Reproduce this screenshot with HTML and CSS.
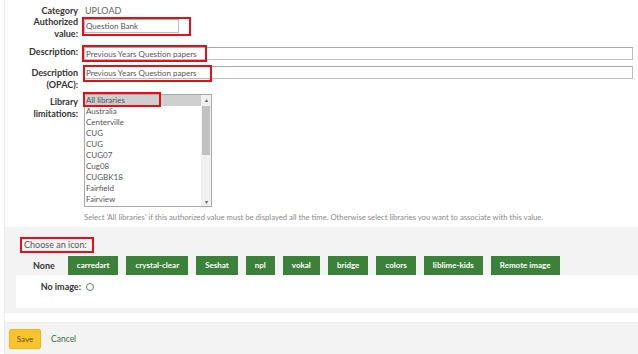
FILE: index.html
```html
<!DOCTYPE html>
<html>
<head>
    <meta charset="UTF-8">
    <title>Modify authorized value</title>
    <link rel="stylesheet" href="styles.css">
</head>
<body>
    <div class="page">
    <form action="#" method="post">
        <div class="row row-cat">
            <span class="lbl">Category</span>
            <span class="value">UPLOAD</span>
        </div>

        <div class="row row-auth">
            <label class="lbl" for="authval">Authorized<br>value:</label>
            <div class="mark-wrap">
                <input type="text" id="authval" class="field field-short" value="Question Bank">
                <span class="mark mark-auth"></span>
            </div>
        </div>

        <div class="row row-desc">
            <label class="lbl" for="desc">Description:</label>
            <div class="mark-wrap grow">
                <input type="text" id="desc" class="field field-long" value="Previous Years Question papers">
                <span class="mark mark-desc"></span>
            </div>
        </div>

        <div class="row row-opac">
            <label class="lbl" for="opac">Description<br>(OPAC):</label>
            <div class="mark-wrap grow">
                <input type="text" id="opac" class="field field-long" value="Previous Years Question papers">
                <span class="mark mark-opac"></span>
            </div>
        </div>

        <div class="row row-lib">
            <span class="lbl">Library<br>limitations:</span>
            <div class="mark-wrap">
                <div class="libselect">
                    <div class="opts">
                        <div class="opt selected">All libraries</div>
                        <div class="opt">Australia</div>
                        <div class="opt">Centerville</div>
                        <div class="opt">CUG</div>
                        <div class="opt">CUG</div>
                        <div class="opt">CUG07</div>
                        <div class="opt">Cug08</div>
                        <div class="opt">CUGBK18</div>
                        <div class="opt">Fairfield</div>
                        <div class="opt">Fairview</div>
                    </div>
                    <div class="sbar">
                        <span class="arrow">&#9652;</span>
                        <span class="track"><span class="thumb"></span></span>
                        <span class="arrow">&#9662;</span>
                    </div>
                </div>
                <span class="mark mark-lib"></span>
            </div>
        </div>
        <div class="hint">Select 'All libraries' if this authorized value must be displayed all the time. Otherwise select libraries you want to associate with this value.</div>

        <fieldset class="icons">
            <div class="legend"><span class="mark-wrap">Choose an icon:<span class="mark mark-icon"></span></span></div>
            <div class="tabs">
                <span class="tab active">None</span>
                <span class="btn-green">carredart</span>
                <span class="btn-green">crystal-clear</span>
                <span class="btn-green">Seshat</span>
                <span class="btn-green">npl</span>
                <span class="btn-green">vokal</span>
                <span class="btn-green">bridge</span>
                <span class="btn-green">colors</span>
                <span class="btn-green">liblime-kids</span>
                <span class="btn-green">Remote image</span>
            </div>
            <div class="panel">
                <label class="noimg" for="noimage">No image:</label>
                <input type="radio" id="noimage" name="icon" class="radio">
            </div>
        </fieldset>

        <div class="actions">
            <button type="button" class="save">Save</button>
            <a href="#" class="cancel">Cancel</a>
        </div>
    </form>
    </div>
</body>
</html>
```

FILE: styles.css
```css
body {
    margin: 0;
    background-color: #ffffff;
    font-family: Lato, "Liberation Sans", sans-serif;
    font-size: 9px;
    color: #333333;
}
.page {
    border-left: 1px solid #ececec;
    margin-left: 4px;
    min-height: 354px;
}
form {
    padding-top: 5px;
}
.row {
    display: flex;
    gap: 6px;
    line-height: 12px;
}
.lbl {
    width: 73px;
    flex: none;
    text-align: right;
    font-weight: bold;
    color: #333333;
}
.value {
    color: #666666;
    padding-left: 1px;
}
.row-auth { margin-top: -1px; }
.row-auth .mark-wrap { margin-top: 3px; }
.row-desc { margin-top: 6px; }
.row-desc .mark-wrap { margin-top: 1px; }
.row-opac { margin-top: 6px; }
.row-opac .lbl { padding-top: 1px; }
.row-lib { margin-top: 3px; }
.row-lib .lbl { padding-top: 2px; }
.grow { flex: 1; padding-right: 5px; }

.mark-wrap {
    position: relative;
    display: block;
}
.mark {
    position: absolute;
    border: 2px solid #e3101a;
    pointer-events: none;
}
.mark-auth { left: -2px; top: -2px; width: 105px; height: 15px; }
.mark-desc { left: -2px; top: -2px; width: 121px; height: 13px; }
.mark-opac { left: -1px; top: -1px; width: 125px; height: 13px; }
.mark-lib { left: -1px; top: -2px; width: 74px; height: 11px; }
.mark-icon { left: -4px; top: -2px; width: 70px; height: 12px; }

.field {
    display: block;
    box-sizing: border-box;
    height: 14px;
    border: 1px solid #bdbdbd;
    border-top-color: #a9a9a9;
    padding: 0 1px;
    font-family: Lato, "Liberation Sans", sans-serif;
    font-size: 8px;
    color: #555555;
    background: #ffffff;
}
.field-short { width: 95px; }
.field-long { width: 100%; height: 13px; }

.libselect {
    display: flex;
    box-sizing: border-box;
    width: 128px;
    height: 113px;
    border: 1px solid #a9a9a9;
    background: #ffffff;
    overflow: hidden;
}
.opts {
    flex: 1;
    padding-top: 0;
}
.opt {
    height: 11px;
    line-height: 11px;
    padding-left: 1px;
    font-size: 8px;
    color: #555555;
}
.opt.selected {
    background: #cfcfcf;
}
.sbar {
    width: 10px;
    display: flex;
    flex-direction: column;
    background: #f0f0f0;
}
.arrow {
    height: 9px;
    line-height: 9px;
    font-size: 6px;
    text-align: center;
    color: #606060;
}
.track {
    flex: 1;
    padding: 0 1px;
}
.thumb {
    display: block;
    height: 49px;
    margin-top: 2px;
    background: #c1c1c1;
}

.hint {
    margin: 5px 0 0 79px;
    line-height: 11px;
    font-size: 7.7px;
    color: #8a8a8a;
}

.icons {
    margin: 4px 0 0 0;
    padding: 12px 0 5px 11px;
    border: 0;
    background: #f3f3f3;
}
.legend {
    padding-left: 8px;
    line-height: 12px;
    color: #555555;
}
.tabs {
    display: flex;
    gap: 8px;
    margin-top: 5px;
    line-height: 19px;
    height: 19px;
}
.tab {
    padding: 0 5px 0 17px;
    font-weight: bold;
    color: #333333;
    background: #f3f3f3;
}
.btn-green {
    padding: 0 9px;
    background: #3b8139;
    color: #ffffff;
    font-weight: bold;
    font-size: 8px;
}
.panel {
    display: flex;
    align-items: center;
    gap: 5px;
    height: 33px;
    background: #ffffff;
}
.noimg {
    width: 65px;
    text-align: right;
    font-weight: bold;
    margin-top: -10px;
}
.radio {
    width: 8px;
    height: 8px;
    margin: -10px 0 0 0;
}

.actions {
    margin-top: 9px;
    height: 32px;
    display: flex;
    align-items: center;
    gap: 10px;
    padding-left: 4px;
    background: #f3f3f3;
    border-top: 1px solid #ececec;
}
.save {
    width: 32px;
    height: 20px;
    padding: 0;
    border: 1px solid #f3b51f;
    border-radius: 2px;
    background: #fcc22c;
    font-family: Lato, "Liberation Sans", sans-serif;
    font-size: 8px;
    color: #5a4a20;
}
.cancel {
    font-size: 8.5px;
    color: #3f6a45;
    text-decoration: none;
}
```
